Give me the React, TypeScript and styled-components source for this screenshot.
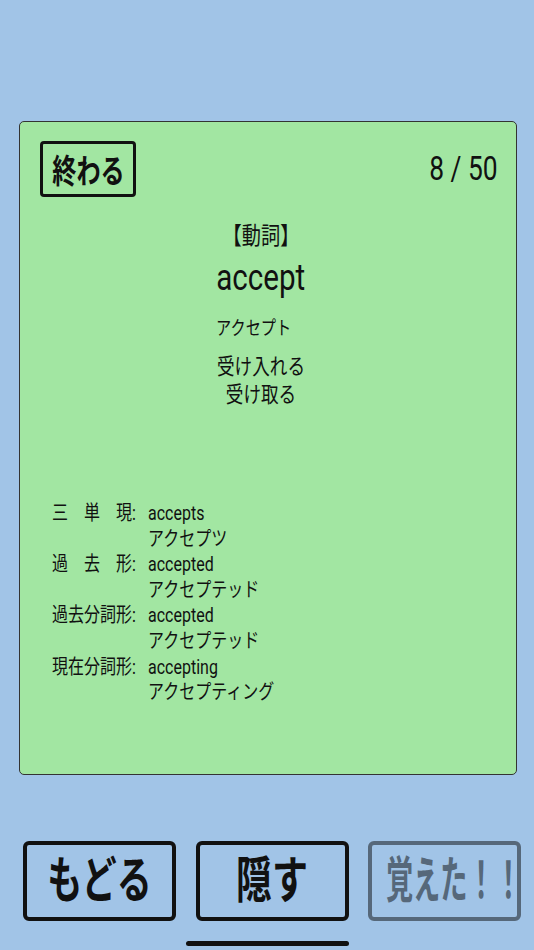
import { Fragment } from 'react';
import styled, { createGlobalStyle } from 'styled-components';

const GlobalStyle = createGlobalStyle`
  html, body {
    margin: 0;
    padding: 0;
    background: #a1c4e7;
  }
  body {
    font-family: Roboto, 'Noto Sans CJK JP', sans-serif;
    color: #111;
  }
`;

const Screen = styled.main`
  display: flex;
  flex-direction: column;
  width: 534px;
  height: 950px;
  overflow: hidden;
`;

// the reference text is drawn narrower than it is tall
const Squeeze = styled.span<{ $origin?: string; $sx?: number }>`
  display: inline-block;
  white-space: nowrap;
  transform: scaleX(${(p) => p.$sx ?? 0.8});
  transform-origin: ${(p) => p.$origin ?? 'center'};
`;

const Card = styled.section`
  display: flex;
  flex-direction: column;
  box-sizing: border-box;
  width: 498px;
  height: 654px;
  margin: 121px 0 0 19px;
  padding: 19px 18px 0 20px;
  background: #a2e6a2;
  border: 1px solid #333;
  border-radius: 5px;
`;

const Header = styled.div`
  display: flex;
  justify-content: space-between;
  align-items: center;
`;

const EndButton = styled.button`
  display: flex;
  align-items: center;
  justify-content: center;
  box-sizing: border-box;
  width: 96px;
  height: 56px;
  padding: 0;
  background: transparent;
  border: 3px solid #111;
  border-radius: 4px;
  font-family: inherit;
  font-size: 33px;
  font-weight: 700;
  color: #111;
`;

const Counter = styled.div`
  font-size: 33px;
  line-height: 40px;
`;

const Entry = styled.div`
  display: flex;
  flex-direction: column;
  align-items: center;
  padding-right: 16px;
`;

const PartOfSpeech = styled.div`
  margin-top: 24px;
  font-size: 24px;
  line-height: 30px;
`;

const Word = styled.div`
  margin-top: 8px;
  font-size: 37px;
  line-height: 37px;
`;

const Reading = styled.div`
  align-self: flex-start;
  margin: 20px 0 0 176px;
  font-size: 19px;
  line-height: 26px;
`;

const Meanings = styled.div`
  display: flex;
  flex-direction: column;
  align-items: center;
  margin-top: 11px;
  font-size: 22px;
  line-height: 28px;
`;

const Forms = styled.div`
  display: grid;
  grid-template-columns: 96px auto;
  margin: 92px 0 0 12px;
  font-size: 20px;
  line-height: 25.6px;
`;

const FormLabel = styled.div`
  align-self: start;
`;

const FormValues = styled.div`
  display: flex;
  flex-direction: column;
  align-items: flex-start;
`;

const Actions = styled.div`
  display: grid;
  grid-template-columns: repeat(3, 153px);
  column-gap: 19.5px;
  margin-top: 66px;
  padding-left: 23px;
`;

const ActionButton = styled.button<{ $disabled?: boolean; $nudge?: number }>`
  display: flex;
  align-items: center;
  justify-content: center;
  box-sizing: border-box;
  height: 80px;
  padding: 0 0 0 ${(p) => p.$nudge ?? 0}px;
  background: transparent;
  border: 4px solid ${(p) => (p.$disabled ? '#56687a' : '#111')};
  border-radius: 6px;
  font-family: inherit;
  font-size: 50px;
  line-height: 60px;
  font-weight: 700;
  color: ${(p) => (p.$disabled ? '#56687a' : '#111')};
  overflow: visible;
`;

const HomeIndicator = styled.div`
  align-self: center;
  width: 163px;
  height: 5px;
  margin-top: 20px;
  border-radius: 3px;
  background: #111;
`;

const forms = [
  { label: '三　単　現:', word: 'accepts', reading: 'アクセプツ' },
  { label: '過　去　形:', word: 'accepted', reading: 'アクセプテッド' },
  { label: '過去分詞形:', word: 'accepted', reading: 'アクセプテッド' },
  { label: '現在分詞形:', word: 'accepting', reading: 'アクセプティング' },
];

const meanings = ['受け入れる', '受け取る'];

export default function App() {
  return (
    <Screen>
      <GlobalStyle />
      <Card>
        <Header>
          <EndButton>
            <Squeeze $sx={0.73}>終わる</Squeeze>
          </EndButton>
          <Counter>
            <Squeeze $origin="right">8 / 50</Squeeze>
          </Counter>
        </Header>
        <Entry>
          <PartOfSpeech>
            <Squeeze>【動詞】</Squeeze>
          </PartOfSpeech>
          <Word>
            <Squeeze>accept</Squeeze>
          </Word>
          <Reading>
            <Squeeze $origin="left">アクセプト</Squeeze>
          </Reading>
          <Meanings>
            {meanings.map((m) => (
              <Squeeze key={m}>{m}</Squeeze>
            ))}
          </Meanings>
        </Entry>
        <Forms>
          {forms.map((f) => (
            <Fragment key={f.label}>
              <FormLabel>
                <Squeeze $origin="left">{f.label}</Squeeze>
              </FormLabel>
              <FormValues>
                <Squeeze $origin="left">{f.word}</Squeeze>
                <Squeeze $origin="left">{f.reading}</Squeeze>
              </FormValues>
            </Fragment>
          ))}
        </Forms>
      </Card>
      <Actions>
        <ActionButton>
          <Squeeze $sx={0.7}>もどる</Squeeze>
        </ActionButton>
        <ActionButton>
          <Squeeze $sx={0.72}>隠す</Squeeze>
        </ActionButton>
        <ActionButton $disabled $nudge={19}>
          <Squeeze $sx={0.545}>覚えた！！</Squeeze>
        </ActionButton>
      </Actions>
      <HomeIndicator />
    </Screen>
  );
}
